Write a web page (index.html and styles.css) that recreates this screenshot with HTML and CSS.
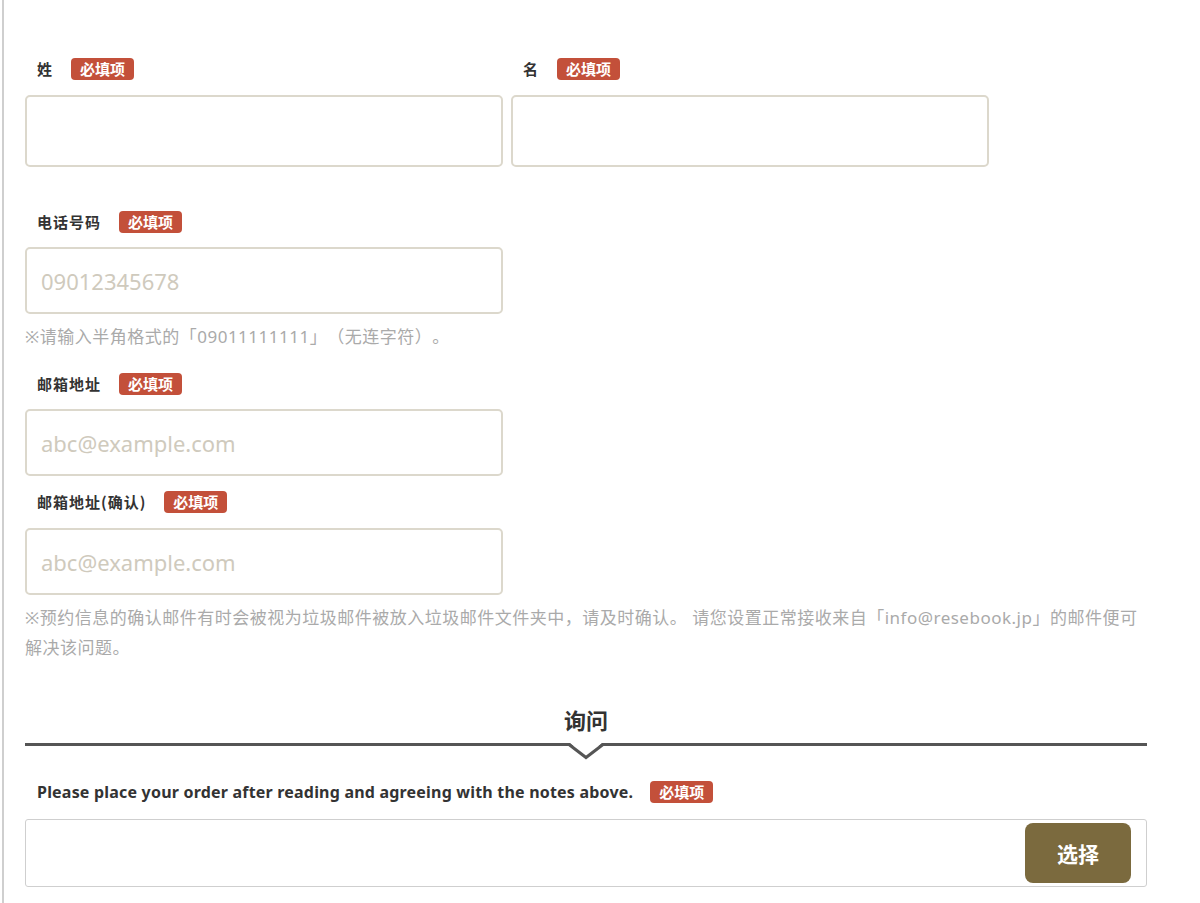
FILE: index.html
```html
<!DOCTYPE html>
<html lang="zh-CN">
<head>
<meta charset="utf-8">
<title>Form</title>
<link rel="stylesheet" href="styles.css">
</head>
<body>
<div class="page">
  <div class="row name-row">
    <div class="field half">
      <div class="label"><span class="label-text">姓</span><span class="badge">必填项</span></div>
      <input class="input tall" type="text">
    </div>
    <div class="field half">
      <div class="label"><span class="label-text">名</span><span class="badge">必填项</span></div>
      <input class="input tall" type="text">
    </div>
  </div>

  <div class="field phone">
    <div class="label"><span class="label-text">电话号码</span><span class="badge">必填项</span></div>
    <input class="input" type="text" placeholder="09012345678">
    <p class="note">※请输入半角格式的「09011111111」（无连字符）。</p>
  </div>

  <div class="field email">
    <div class="label"><span class="label-text">邮箱地址</span><span class="badge">必填项</span></div>
    <input class="input" type="text" placeholder="abc@example.com">
  </div>

  <div class="field email2">
    <div class="label"><span class="label-text">邮箱地址(确认)</span><span class="badge">必填项</span></div>
    <input class="input" type="text" placeholder="abc@example.com">
    <p class="note long">※预约信息的确认邮件有时会被视为垃圾邮件被放入垃圾邮件文件夹中，请及时确认。 请您设置正常接收来自「info@resebook.jp」的邮件便可解决该问题。</p>
  </div>

  <div class="section-head">
    <h2 class="section-title">询问</h2>
    <div class="section-line">
      <svg class="pointer" width="36" height="18" viewBox="0 0 36 18">
        <polygon points="2,0 34,0 18,14" fill="#fff"/>
        <polyline points="1,1.5 18,14.5 35,1.5" fill="none" stroke="#555" stroke-width="3"/>
      </svg>
    </div>
  </div>

  <div class="field agree">
    <div class="label"><span class="label-text en">Please place your order after reading and agreeing with the notes above.</span><span class="badge">必填项</span></div>
    <div class="select-box">
      <button class="select-btn" type="button">选择</button>
    </div>
  </div>
</div>
</body>
</html>
```

FILE: styles.css
```css
* { box-sizing: border-box; }

html, body {
  margin: 0;
  padding: 0;
  background: #fff;
}

body {
  font-family: "Noto Sans", "Noto Sans CJK SC", sans-serif;
  color: #333;
  text-spacing-trim: space-all;
}

.page {
  margin-left: 2px;
  border-left: 2px solid #cfcfcf;
  padding: 58px 53px 0 21px;
  min-height: 903px;
}

.row {
  display: flex;
  gap: 8px;
}

.half {
  width: 478px;
}

.label {
  display: flex;
  align-items: center;
  gap: 18px;
  height: 22px;
  padding-left: 12px;
}

.label-text {
  font-family: "Noto Sans CJK SC", sans-serif;
  font-size: 15px;
  font-weight: 700;
  color: #333;
  letter-spacing: 1px;
  line-height: 22px;
}

.label-text.en {
  font-family: "Noto Sans", "Noto Sans CJK SC", sans-serif;
  letter-spacing: 0.2px;
  font-size: 16px;
}

.badge {
  display: inline-block;
  background: #c3503a;
  color: #fff;
  font-family: "Noto Sans CJK SC", sans-serif;
  font-size: 15px;
  font-weight: 700;
  line-height: 22px;
  height: 22px;
  padding: 0 9px;
  border-radius: 4px;
}

.input {
  display: block;
  width: 478px;
  height: 67px;
  margin: 14px 0 0;
  border: 2px solid #dcd8cc;
  border-radius: 5px;
  padding: 0 14px;
  font-family: "Noto Sans", "Noto Sans CJK SC", sans-serif;
  font-size: 22px;
  color: #333;
  background: #fff;
  outline: none;
}

.input.tall {
  height: 72px;
  margin-top: 15px;
}

.input::placeholder {
  color: #cfcabd;
}

.phone {
  margin-top: 44px;
}

.note {
  margin: 11px 0 0;
  font-family: "Noto Sans", "Noto Sans CJK SC", sans-serif;
  font-size: 17px;
  line-height: 24px;
  letter-spacing: 0.5px;
  color: #aaa;
}

.email {
  margin-top: 24px;
}

.email2 {
  margin-top: 15px;
}

.email2 .input {
  margin-top: 15px;
}

.note.long {
  margin-top: 8px;
  line-height: 30px;
}

.section-head {
  margin-top: 41px;
}

.section-title {
  margin: 0;
  text-align: center;
  font-family: "Noto Sans CJK SC", sans-serif;
  font-size: 22px;
  font-weight: 700;
  line-height: 30px;
  color: #333;
}

.section-line {
  position: relative;
  height: 3px;
  background: #555;
  margin-top: 9px;
}

.pointer {
  position: absolute;
  left: 50%;
  top: 0;
  margin-left: -18px;
}

.agree {
  margin-top: 35px;
}

.agree .label {
  gap: 17px;
}

.select-box {
  margin-top: 16px;
  height: 68px;
  border: 1px solid #cfcfcf;
  border-radius: 3px;
  display: flex;
  justify-content: flex-end;
  align-items: center;
  padding-right: 15px;
}

.select-btn {
  width: 106px;
  height: 60px;
  border: none;
  border-radius: 8px;
  background: #7b6a3e;
  color: #fff;
  font-family: "Noto Sans CJK SC", sans-serif;
  font-size: 21px;
  font-weight: 700;
  cursor: pointer;
}
```
